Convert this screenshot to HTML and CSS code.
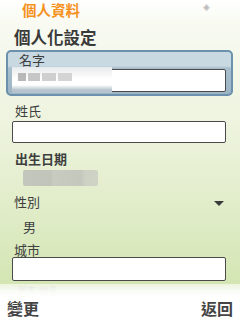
FILE: index.html
```html
<!DOCTYPE html>
<html>
<head>
<meta charset="utf-8">
<link rel="stylesheet" href="styles.css">
</head>
<body>
<div class="screen">
  <div class="header">
    <span class="title">個人資料</span>
    <span class="status">◈</span>
  </div>
  <div class="content">
    <div class="heading">個人化設定</div>
    <div class="field focused">
      <div class="label">名字</div>
      <div class="input">
        <div class="blur">
          <span class="px p1"></span><span class="px p2"></span><span class="px p3"></span><span class="px p4"></span>
        </div>
      </div>
    </div>
    <div class="field">
      <div class="label">姓氏</div>
      <div class="input"></div>
    </div>
    <div class="field">
      <div class="label bold">出生日期</div>
      <div class="dateblur"></div>
    </div>
    <div class="field select">
      <div class="row"><span class="label">性別</span><span class="arrow"></span></div>
      <div class="value">男</div>
    </div>
    <div class="field">
      <div class="label">城市</div>
      <div class="input"></div>
    </div>
    <div class="field">
      <div class="label faded">國家/地區</div>
    </div>
  </div>
  <div class="softkeys">
    <span>變更</span>
    <span>返回</span>
  </div>
</div>
</body>
</html>
```

FILE: styles.css
```css
* { box-sizing: border-box; }
html, body { margin: 0; padding: 0; }
body {
  width: 240px;
  height: 320px;
  overflow: hidden;
  font-family: "Noto Sans CJK TC", "Noto Sans CJK SC", sans-serif;
  color: #404040;
}
.screen {
  position: relative;
  width: 240px;
  height: 320px;
  overflow: hidden;
  background: linear-gradient(to bottom, #fdfdf9 0px, #f6f9ee 40px, #eef4df 120px, #e2edcb 200px, #d6e7b7 270px, #d3e5b2 290px);
}
.header {
  height: 17px;
  display: flex;
  align-items: flex-start;
  justify-content: space-between;
  padding: 0 30px 0 22px;
  background: linear-gradient(to bottom, #ffffff, #fafcf5);
}
.title {
  color: #f5921e;
  font-size: 14.5px;
  line-height: 19px;
  font-weight: 700;
  margin-bottom: -2px;
}
.status {
  color: #b8b8b8;
  font-size: 9px;
  line-height: 13px;
}
.heading {
  margin: 9px 0 0 14px;
  font-size: 16.5px;
  line-height: 22px;
  font-weight: 700;
  color: #3a3a3a;
}
.field {
  margin: 0 14px 0 12px;
}
.label {
  font-size: 13px;
  line-height: 16px;
  padding-left: 3px;
  color: #3e3e3e;
}
.label.bold { font-weight: 700; }
.field.focused {
  margin: 2px 7px 0 6px;
  border: 2px solid #6b91ad;
  border-radius: 5px;
  padding: 1px 5px 2px 4px;
  background: linear-gradient(to bottom, #c9d9e1 0px, #c9d9e1 14px, #a9bfcd 16px, #9db5c5 40px);
}
.field.focused .label {
  padding-left: 7px;
  line-height: 14px;
  margin-bottom: 2px;
}
.input {
  height: 23px;
  background: #ffffff;
  border: 1px solid #4a4a4c;
  border-radius: 2px;
  position: relative;
}
.blur {
  position: absolute;
  left: -1px;
  top: -3px;
  width: 100px;
  height: 26px;
  background: linear-gradient(to bottom, #e6eaec 0px, #f4f4f4 6px, #ffffff 12px, #ffffff 18px, #b4c3cd 23px);
}
.px {
  position: absolute;
  top: 6px;
  height: 8px;
}
.p1 { left: 6px; width: 8px; background: #b8b8b8; }
.p2 { left: 16px; width: 12px; background: #c6c6c6; }
.p3 { left: 30px; width: 14px; background: #cfcfcf; }
.p4 { left: 46px; width: 14px; background: #d4d4d4; }
.field:nth-child(3) { margin-top: 6px; }
.field:nth-child(3) .label { line-height: 17px; margin-bottom: 2px; }
.field:nth-child(3) .input { height: 22px; }
.field:nth-child(4) { margin-top: 8px; }
.field:nth-child(4) .label { line-height: 15px; }
.dateblur {
  margin: 4px 0 0 11px;
  width: 75px;
  height: 16px;
  border-radius: 2px;
  background: linear-gradient(to right, #c3c6bc 0px, #c0c4b9 28px, #c8ccc0 30px, #c4c7bc 58px, #cdd1c4 62px, #cfd3c6 75px);
}
.field.select { margin-top: 8px; margin-right: 16px; }
.row {
  display: flex;
  align-items: center;
  justify-content: space-between;
  height: 15px;
}
.row .label { padding-left: 2px; }
.arrow {
  width: 0;
  height: 0;
  border-left: 5px solid transparent;
  border-right: 5px solid transparent;
  border-top: 5px solid #3a3a3a;
  margin-top: 3px;
}
.value {
  font-size: 13px;
  line-height: 16px;
  margin: 10px 0 0 11px;
}
.field.select + .field { margin-top: 8px; }
.field.select + .field .label { line-height: 14px; padding-left: 2px; }
.field.select + .field .input { height: 24px; }
.label.faded {
  margin-top: 5px;
  font-size: 9px;
  line-height: 9px;
  color: #a8ad9e;
  padding-left: 6px;
}
.softkeys {
  position: absolute;
  left: 0;
  right: 0;
  bottom: 0;
  height: 36px;
  display: flex;
  justify-content: space-between;
  align-items: flex-end;
  padding: 0 7px 0 7px;
  background: linear-gradient(to bottom, rgba(255,255,255,0.55) 0px, rgba(255,255,255,0.92) 8px, #ffffff 14px);
}
.softkeys span {
  font-size: 16px;
  line-height: 23px;
  color: #444;
  font-weight: 700;
}
```
